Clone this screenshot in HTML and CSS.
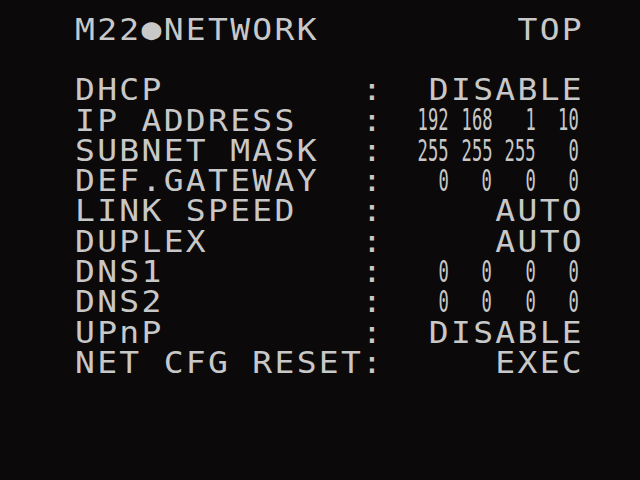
FILE: index.html
```html
<!DOCTYPE html>
<html lang="en">
<head>
  <meta charset="UTF-8">
  <link rel="stylesheet" href="styles.css">
  <title>M22 Network</title>
</head>
<body>

  <main class="osd">
    <header class="osd-title">
      <span>M22<span class="dot">●</span>NETWORK</span>
      <span class="value">TOP</span>
    </header>

    <div class="osd-row">
      <span class="label">DHCP</span><span class="colon">:</span>
      <span class="value">DISABLE</span>
    </div>
    <div class="osd-row">
      <span class="label">IP ADDRESS</span><span class="colon">:</span>
      <span class="value ip">
        <span class="octet"><span>192</span></span>
        <span class="octet"><span>168</span></span>
        <span class="octet"><span>1</span></span>
        <span class="octet"><span>10</span></span>
      </span>
    </div>
    <div class="osd-row">
      <span class="label">SUBNET MASK</span><span class="colon">:</span>
      <span class="value ip">
        <span class="octet"><span>255</span></span>
        <span class="octet"><span>255</span></span>
        <span class="octet"><span>255</span></span>
        <span class="octet"><span>0</span></span>
      </span>
    </div>
    <div class="osd-row">
      <span class="label">DEF.GATEWAY</span><span class="colon">:</span>
      <span class="value ip">
        <span class="octet"><span>0</span></span>
        <span class="octet"><span>0</span></span>
        <span class="octet"><span>0</span></span>
        <span class="octet"><span>0</span></span>
      </span>
    </div>
    <div class="osd-row">
      <span class="label">LINK SPEED</span><span class="colon">:</span>
      <span class="value">AUTO</span>
    </div>
    <div class="osd-row">
      <span class="label">DUPLEX</span><span class="colon">:</span>
      <span class="value">AUTO</span>
    </div>
    <div class="osd-row">
      <span class="label">DNS1</span><span class="colon">:</span>
      <span class="value ip">
        <span class="octet"><span>0</span></span>
        <span class="octet"><span>0</span></span>
        <span class="octet"><span>0</span></span>
        <span class="octet"><span>0</span></span>
      </span>
    </div>
    <div class="osd-row">
      <span class="label">DNS2</span><span class="colon">:</span>
      <span class="value ip">
        <span class="octet"><span>0</span></span>
        <span class="octet"><span>0</span></span>
        <span class="octet"><span>0</span></span>
        <span class="octet"><span>0</span></span>
      </span>
    </div>
    <div class="osd-row">
      <span class="label">UPnP</span><span class="colon">:</span>
      <span class="value">DISABLE</span>
    </div>
    <div class="osd-row">
      <span class="label">NET CFG RESET</span><span class="colon">:</span>
      <span class="value">EXEC</span>
    </div>
  </main>

</body>
</html>
```

FILE: styles.css
```css
html,
body {
  margin: 0;
  height: 100%;
  background-color: #0b0909;
}

body {
  font-family: 'DejaVu Sans Mono', monospace;
  font-size: 33px;
  line-height: 33.6px;
  color: #c8c8c8;
  letter-spacing: 2.3px;
  overflow: hidden;
}

/* the camera OSD font is squat, so squash the whole screen a little */
.osd {
  width: 509px;
  padding: 15.8px 0 0 75px;
  transform: scaleY(0.9);
  transform-origin: top left;
}

.osd-title {
  display: flex;
  justify-content: space-between;
  margin-bottom: 34px;
}

.dot {
  display: inline-block;
  transform: translateY(-1px);
}

.osd-row {
  display: flex;
  height: 33.67px;
}

.label {
  width: 287px;
  white-space: pre;
}

.colon {
  width: 22px;
}

.value {
  flex: 1;
  text-align: right;
  white-space: pre;
}

.ip {
  display: flex;
  justify-content: flex-end;
  letter-spacing: 0;
  padding-right: 5px;
}

.octet {
  display: flex;
  justify-content: flex-end;
  width: 43.4px;
}

.octet span {
  display: inline-block;
  transform: scaleX(0.52);
  transform-origin: right center;
}
```
